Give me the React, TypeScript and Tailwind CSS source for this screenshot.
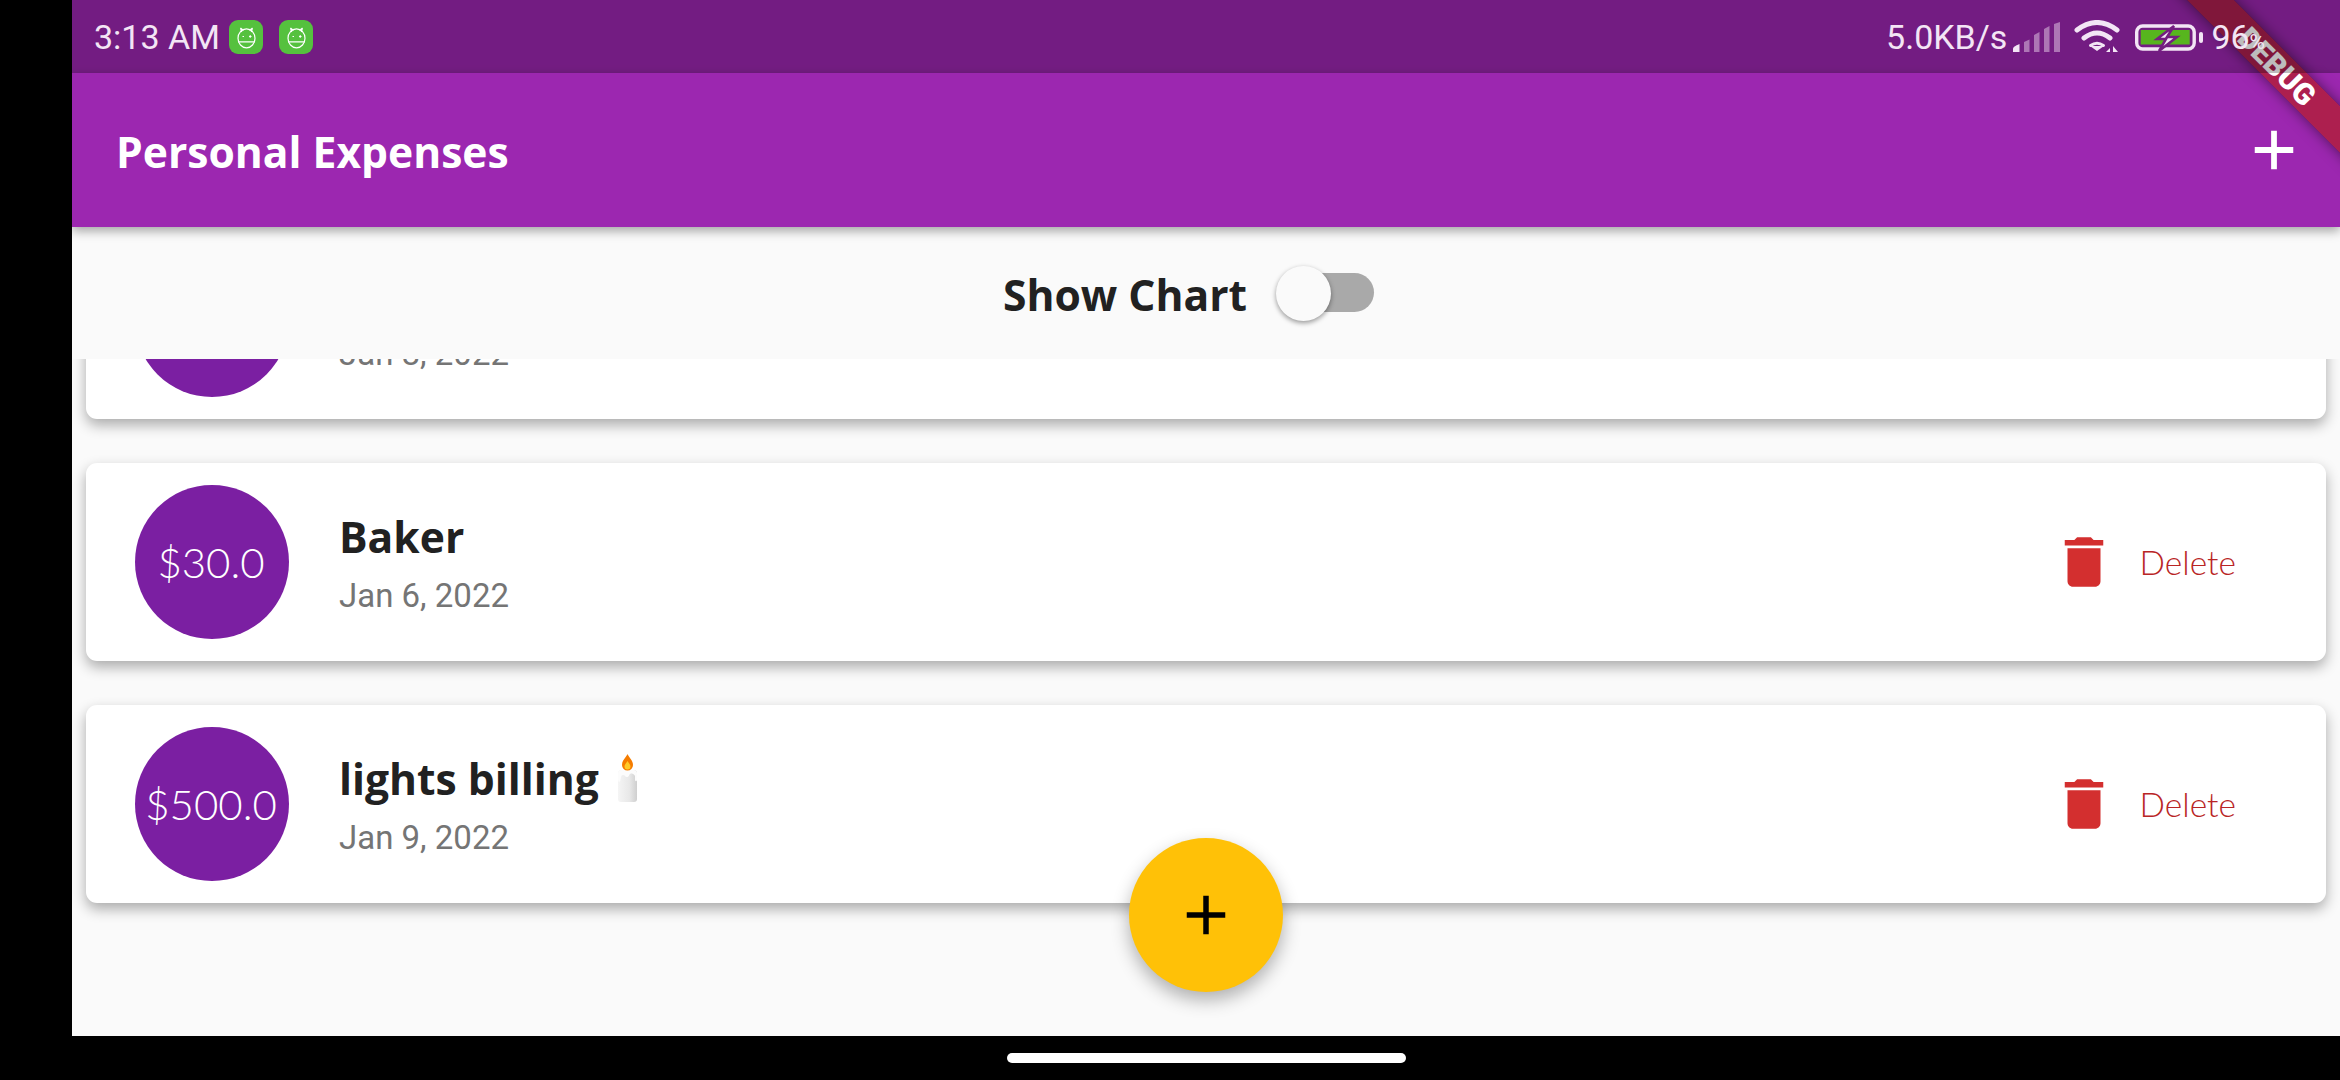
import { Plus } from "lucide-react";

const openSans = "font-['Open_Sans',sans-serif]";
const roboto = "font-['Roboto',sans-serif]";
const thin = "font-['Lato',sans-serif] font-light";

function Candle() {
  return (
    <svg viewBox="0 0 21 48" className="w-[21px] h-[48px] ml-[18px]">
      <defs>
        <linearGradient id="wax" x1="0" x2="1" y1="0" y2="0">
          <stop offset="0" stopColor="#f5f5f5" />
          <stop offset="0.6" stopColor="#e8e8e8" />
          <stop offset="1" stopColor="#cfcfcf" />
        </linearGradient>
      </defs>
      <path d="M1 19c0-1.500 1-3 3-3h13c2 0 3 1.500 3 3v26c0 2-1 3-3 3H4c-2 0-3-1-3-3z" fill="url(#wax)" />
      <path d="M1 19c0-1.500 1-3 3-3h13c2 0 3 1.500 3 3v7c0 1.500-2 1.500-2 0v-4c-1-2-3-3-5-2-1 .5-1 3-3 3s-2-2-4-2-2 2-2.500 5-2.500 2-2.500-1z" fill="#fcfcfc" />
      <path d="M10.500 0c1 3 5.500 6 5.500 11a5.500 5.500 0 0 1-11 0c0-5 4.500-8 5.500-11z" fill="#f57c00" />
      <path d="M10.500 7c1 2 3 3.500 3 5.500a3 3 0 0 1-6 0c0-2 2-3.500 3-5.500z" fill="#ffca28" />
    </svg>
  );
}

function RobotIcon() {
  return (
    <span className="w-[34px] h-[34px] rounded-[9px] bg-[#55c13e] flex items-center justify-center">
      <svg viewBox="0 0 34 34" className="w-[34px] h-[34px]" fill="none" stroke="white" strokeWidth="1.200">
        <ellipse cx="17.500" cy="18.300" rx="8.500" ry="9.500" />
        <path d="M9.300 21.800h16.400M11.500 8l1.200 4M23.500 8l-1.200 4M11.500 8l3 2.500M23.500 8l-3 2.500" />
        <path d="M13.500 16.500h1.500M20 16.500h2.500M21.250 15.250v2.500" />
      </svg>
    </span>
  );
}

function StatusBar() {
  return (
    <div className="relative z-[42] h-full flex items-center justify-between pl-[22px] pr-[75px] text-[#f3e5f5] text-[34px] font-['Roboto',sans-serif]">
      <div className="flex items-center">
        <span className="pt-[1px]">3:13 AM</span>
        <div className="flex gap-[16px] ml-[9px]">
          <RobotIcon />
          <RobotIcon />
        </div>
      </div>
      <div className="flex items-center">
        <span className="pt-[1px]">5.0KB/s</span>
        <svg viewBox="0 0 48 30" className="w-[48px] h-[30px] ml-[6px]" fill="#f3e5f5">
          <path d="M0 30v-3c0-2 2-3 6.500-5v8z" />
          <path d="M11 30V20l5.500-2.500V30zM21 30V13l5.500-3V30zM31 30V7l5.500-3V30zM41 30V2l6-2V30z" opacity="0.45" />
        </svg>
        <svg viewBox="0 0 46 34" className="w-[46px] h-[34px] ml-[13px]" fill="none" stroke="#f3e5f5" strokeLinecap="round" strokeWidth="5">
          <path d="M3 10Q23-5 43 10M10 18Q23 8 36 18" />
          <path d="M16 26h14l-7 5z" fill="#f3e5f5" stroke="none" />
          <path d="M16.500 25.500Q23 21 29.500 25.500" strokeWidth="3" />
          <path d="M32 32l4-4v4zM39 32v-6l5 6z" fill="#f3e5f5" stroke="none" />
        </svg>
        <svg viewBox="0 0 68 30" className="w-[68px] h-[30px] ml-[15px]">
          <rect x="1.700" y="4" width="57.500" height="23" rx="6" fill="none" stroke="#f3e5f5" strokeWidth="3.400" />
          <rect x="5.700" y="8" width="49" height="14.500" fill="#57b51e" />
          <rect x="64" y="10" width="4" height="11" rx="2" fill="#f3e5f5" />
          <path d="M39 4L22 17h9l-7 12 18-14H32z" fill="#f3e5f5" stroke="#741e80" strokeWidth="2.500" />
        </svg>
        <span className="ml-[8px] pt-[1px]">
          96<span className="text-[21px]">%</span>
        </span>
      </div>
    </div>
  );
}

function TrashIcon() {
  return (
    <svg viewBox="0 0 24 24" className="w-[66px] h-[66px]" fill="#d32f2f">
      <path d="M6 19c0 1.100.9 2 2 2h8c1.100 0 2-.9 2-2V7H6v12zM19 4h-3.500l-1-1h-5l-1 1H5v2h14V4z" />
    </svg>
  );
}

function ExpenseCard({ amount, title, date, emoji }: { amount: string; title: string; date: string; emoji?: boolean }) {
  return (
    <div className="h-[198px] mx-[14px] bg-white rounded-[11px] shadow-[0_6px_14px_rgba(0,0,0,0.32)] flex items-center pl-[49px] pr-[90px]">
      <div className={`w-[154px] h-[154px] pr-[2px] rounded-full bg-[#7b1fa2] text-white flex items-center justify-center text-[42px] ${thin}`}>
        {amount}
      </div>
      <div className="ml-[50px] pb-[3px] flex-1">
        <div className={`flex items-center h-[60px] text-[42.6px] leading-[60px] font-bold text-[#212121] ${openSans}`}>
          {title}
          {emoji && <Candle />}
        </div>
        <div className={`mt-[10px] text-[33px] leading-[40px] text-[#757575] ${roboto}`}>{date}</div>
      </div>
      <div className="flex items-center">
        <TrashIcon />
        <span className={`ml-[23px] text-[33.5px] text-[#b92525] ${thin}`}>Delete</span>
      </div>
    </div>
  );
}

export default function App() {
  return (
    <div className="relative w-[2340px] h-[1080px] overflow-hidden bg-black flex flex-col">
      <div className="h-[1036px] pl-[72px] flex">
        <div className="flex-1 bg-[#fafafa] flex flex-col">
          <div className="h-[73px] bg-[#9c27b0]">
            <StatusBar />
          </div>
          <header className="relative z-20 h-[154px] bg-[#9c27b0] shadow-[0_4px_10px_rgba(0,0,0,0.35)] flex items-center justify-between pl-[44px] pr-[33px]">
            <h1 className={`pt-[4px] text-[42.6px] font-bold text-white ${openSans}`}>Personal Expenses</h1>
            <Plus className="w-[66px] h-[66px] text-white" strokeWidth={2.1} strokeLinecap="butt" />
          </header>
          <div className="relative z-10 h-[132px] pl-[2px] bg-[#fafafa] flex items-center justify-center">
            <span className={`pt-[3px] text-[42.6px] font-bold text-[#212121] ${openSans}`}>Show Chart</span>
            <div className="w-[162px] h-[55px] ml-[2px] relative">
              <div className="absolute left-[34px] top-[7px] w-[91px] h-[39px] rounded-full bg-[#a9a9a9]" />
              <div className="absolute left-[27px] top-0 w-[55px] h-[55px] rounded-full bg-[#fafafa] shadow-[0_2px_5px_rgba(0,0,0,0.4)]" />
            </div>
          </div>
          <div className="h-[565px] overflow-hidden">
            <div className="-mt-[138px] flex flex-col gap-[44px]">
              <ExpenseCard amount="$20.0" title="Food" date="Jan 8, 2022" />
              <ExpenseCard amount="$30.0" title="Baker" date="Jan 6, 2022" />
              <ExpenseCard amount="$500.0" title="lights billing" date="Jan 9, 2022" emoji />
            </div>
          </div>
        </div>
      </div>
      <div className="flex-1 pl-[72px] flex items-center justify-center">
        <div className="w-[399px] h-[10px] rounded-full bg-white" />
      </div>

      {/* FAB */}
      <button className="absolute left-[1129px] top-[838px] z-30 w-[154px] h-[154px] rounded-full bg-[#ffc107] shadow-[0_8px_18px_rgba(0,0,0,0.3)] flex items-center justify-center">
        <Plus className="w-[66px] h-[66px] text-black" strokeWidth={2} strokeLinecap="butt" />
      </button>

      {/* Debug banner, sits under the system status bar scrim */}
      <div className={`absolute left-[2127px] top-[50px] z-40 w-[300px] h-[33px] rotate-45 bg-[#b71c1c]/65 shadow-[0_0_14px_rgba(0,0,0,0.5)] flex items-center justify-center text-[30px] leading-none font-black text-white ${roboto}`}>
        DEBUG
      </div>
      <div className="absolute left-[72px] right-0 top-0 h-[73px] z-[41] bg-black/[0.26]" />
    </div>
  );
}
